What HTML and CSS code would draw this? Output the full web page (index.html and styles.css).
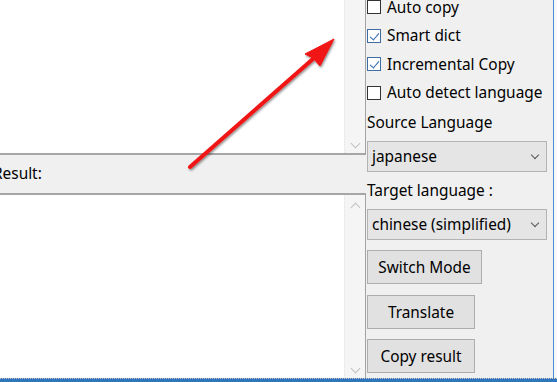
FILE: index.html
```html
<!DOCTYPE html>
<html lang="en">
<head>
    <meta charset="UTF-8">
    <title>Translator</title>
    <link rel="stylesheet" href="styles.css">
</head>
<body>
    <div class="window">
        <div class="main">
            <div class="left">
                <div class="textbox top-box">
                    <div class="scroll">
                        <span class="arrow down"></span>
                    </div>
                </div>
                <div class="result-label">Result:</div>
                <div class="textbox bottom-box">
                    <div class="scroll">
                        <span class="arrow up"></span>
                        <span class="arrow down"></span>
                    </div>
                </div>
            </div>

            <div class="panel">
                <label class="check first"><span class="box"></span>Auto copy</label>
                <label class="check"><span class="box checked"></span>Smart dict</label>
                <label class="check"><span class="box checked"></span>Incremental Copy</label>
                <label class="check"><span class="box"></span>Auto detect language</label>

                <div class="caption">Source Language</div>
                <div class="combo source"><span>japanese</span><span class="chev"></span></div>

                <div class="caption target">Target language :</div>
                <div class="combo"><span>chinese (simplified)</span><span class="chev"></span></div>

                <button class="btn wide">Switch Mode</button>
                <button class="btn mid">Translate</button>
                <button class="btn">Copy result</button>
            </div>
            <div class="edge"></div>
        </div>
        <div class="status"></div>
    </div>

    <!-- flecha de la captura -->
    <svg class="pointer" width="557" height="382" viewBox="0 0 557 382">
        <defs>
            <filter id="sombra" x="-20%" y="-20%" width="140%" height="140%">
                <feDropShadow dx="1" dy="1.5" stdDeviation="1" flood-color="#000" flood-opacity="0.45"/>
            </filter>
        </defs>
        <g filter="url(#sombra)" fill="#f01414" stroke="#f01414">
            <line x1="190" y1="167" x2="314" y2="58" stroke-width="4" stroke-linecap="round"/>
            <polygon points="334,39 305,54 313,58 320,66" stroke-width="1" stroke-linejoin="round"/>
        </g>
    </svg>
</body>
</html>
```

FILE: styles.css
```css
body {
    margin: 0;
    font-family: "Noto Sans", "Open Sans", sans-serif;
    font-size: 15.4px;
    color: #000;
    background: #f0f0f0;
    overflow: hidden;
}

.window {
    width: 557px;
    height: 382px;
    display: flex;
    flex-direction: column;
}

.main {
    flex: 1;
    display: flex;
    margin-left: -8px;
}

.left {
    width: 374px;
    display: flex;
    flex-direction: column;
}

.textbox {
    background: #fff;
    border-right: 1px solid #a3a3a3;
    display: flex;
    justify-content: flex-end;
}

.top-box {
    height: 153px;
    border-bottom: 2px solid #a6a6a6;
}

.bottom-box {
    flex: 1;
    border-top: 2px solid #a6a6a6;
}

.scroll {
    width: 20px;
    background: #f5f5f5;
    border-left: 1px dotted #e2e2e2;
    display: flex;
    flex-direction: column;
    justify-content: space-between;
    align-items: center;
    padding: 9px 0 6px;
}

.top-box .scroll {
    justify-content: flex-end;
}

.arrow {
    width: 6px;
    height: 6px;
    border-right: 1.5px solid #c2c2c2;
    border-bottom: 1.5px solid #c2c2c2;
}

.arrow.down {
    transform: rotate(45deg);
}

.arrow.up {
    transform: rotate(-135deg);
}

.result-label {
    height: 38px;
    line-height: 38px;
    padding-left: 1px;
}

.panel {
    width: 186px;
    padding-left: 1px;
    border-right: 1px solid #4a8fd6;
    display: flex;
    flex-direction: column;
    align-items: flex-start;
}

.edge {
    flex: 1;
    background: #f7f7f7;
}

.check {
    height: 28.5px;
    display: flex;
    align-items: center;
    gap: 6px;
}

.check.first {
    margin-top: -7px;
}

.box {
    width: 14px;
    height: 14px;
    box-sizing: border-box;
    border: 1px solid #333;
    background: #fff;
    position: relative;
}

.box.checked {
    border-color: #3f6da3;
}

.box.checked::after {
    content: "";
    position: absolute;
    left: 4px;
    top: 1px;
    width: 4px;
    height: 8px;
    border-right: 1.7px solid #2f67ad;
    border-bottom: 1.7px solid #2f67ad;
    transform: rotate(40deg);
}

.caption {
    margin-top: 6px;
    height: 20px;
    line-height: 20px;
}

.caption.target {
    margin-top: 9px;
}

.combo {
    margin-top: 8px;
    width: 180px;
    height: 31px;
    box-sizing: border-box;
    border: 1px solid #b3b3b3;
    background: #e5e5e5;
    display: flex;
    align-items: center;
    justify-content: space-between;
    padding: 0 8px 0 4px;
}

.chev {
    width: 5px;
    height: 5px;
    margin-top: -3px;
    border-right: 1px solid #555;
    border-bottom: 1px solid #555;
    transform: rotate(45deg);
}

.btn {
    margin-top: 10px;
    width: 108px;
    height: 34px;
    font: inherit;
    color: #000;
    background: #e1e1e1;
    border: 1px solid #adadad;
    padding: 0;
}

.btn.wide {
    width: 115px;
}

.btn.mid {
    margin-top: 11px;
}

.status {
    height: 3px;
    background: #2f76bd;
    border-top: 1px dotted #c8c8c8;
}

.pointer {
    position: absolute;
    left: 0;
    top: 0;
    pointer-events: none;
}
```
